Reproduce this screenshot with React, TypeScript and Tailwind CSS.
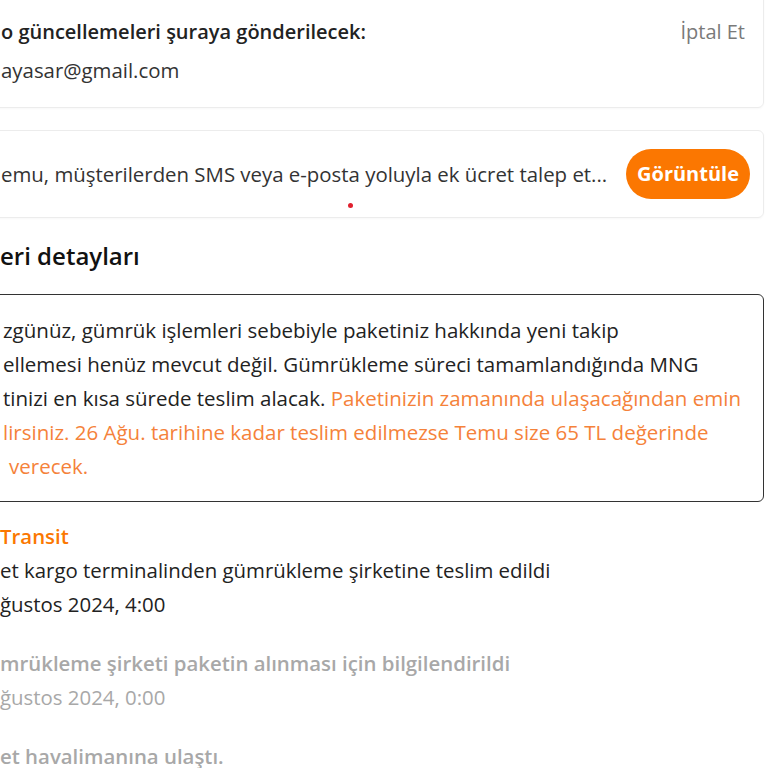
const font = { fontFamily: '"Open Sans", "Noto Sans", sans-serif' };

export default function App() {
  const events = [
    { title: "Transit", text: "et kargo terminalinden gümrükleme şirketine teslim edildi", date: "ğustos 2024, 4:00", active: true },
    { title: "", text: "mrükleme şirketi paketin alınması için bilgilendirildi", date: "ğustos 2024, 0:00", active: false },
    { title: "", text: "et havalimanına ulaştı.", date: "", active: false },
  ];

  return (
    <div className="w-[768px] h-[768px] overflow-hidden bg-white text-[#222]" style={font}>
      <div className="flex flex-col pr-1">
        {/* Email card */}
        <div className="-ml-4 -mt-4 border border-[#ececec] rounded-md shadow-[0_1px_2px_rgba(0,0,0,0.03)] pl-4 pr-[18px] pt-[30px] pb-[20px]">
          <div className="flex justify-between items-center">
            <span className="text-[20px] leading-[34px] font-semibold whitespace-nowrap">o güncellemeleri şuraya gönderilecek:</span>
            <span className="text-[20px] leading-[34px] text-[#7a7a7a]">İptal Et</span>
          </div>
          <div className="text-[20.4px] leading-[34px] text-[#333] mt-[4px]">ayasar@gmail.com</div>
        </div>

        {/* Notice card */}
        <div className="relative mt-[22px] -ml-4 h-[88px] border border-[#ececec] rounded-md shadow-[0_1px_2px_rgba(0,0,0,0.03)] pl-4 pr-[13px] flex items-center justify-between">
          <span className="text-[20.4px] text-[#333] whitespace-nowrap">emu, müşterilerden SMS veya e-posta yoluyla ek ücret talep et...</span>
          <button className="h-[50px] px-[11px] rounded-full bg-[#fb7701] text-white text-[20px] font-bold">Görüntüle</button>
          <span className="absolute left-[363px] bottom-[9px] w-[5px] h-[5px] rounded-full bg-[#e0202e]" />
        </div>

        <h2 className="mt-[20px] text-[24px] leading-[36px] font-semibold text-[#111]">eri detayları</h2>

        {/* Customs box */}
        <div className="mt-[20px] -ml-4 border-[1.5px] border-[#333] rounded-md pl-[18px] py-[18px] text-[20.5px] leading-[34px] whitespace-nowrap">
          <div>zgünüz, gümrük işlemleri sebebiyle paketiniz hakkında yeni takip</div>
          <div>ellemesi henüz mevcut değil. Gümrükleme süreci tamamlandığında MNG</div>
          <div>
            tinizi en kısa sürede teslim alacak.{" "}
            <span className="text-[#f5823a]">Paketinizin zamanında ulaşacağından emin</span>
          </div>
          <div className="text-[#f5823a]">lirsiniz. 26 Ağu. tarihine kadar teslim edilmezse Temu size 65 TL değerinde</div>
          <div className="text-[#f5823a] pl-[6px]">verecek.</div>
        </div>

        {/* Timeline */}
        <div className="mt-[17px] flex flex-col gap-[25px]">
          {events.map((e, i) => (
            <div key={i} className="text-[20.4px] leading-[34px] whitespace-nowrap">
              {e.title && <div className="font-semibold text-[#fb7701]">{e.title}</div>}
              <div className={e.active ? "text-[#222]" : "font-semibold text-[#a8a8a8]"}>{e.text}</div>
              {e.date && <div className={e.active ? "text-[#222]" : "text-[#a8a8a8]"}>{e.date}</div>}
            </div>
          ))}
        </div>
      </div>
    </div>
  );
}
